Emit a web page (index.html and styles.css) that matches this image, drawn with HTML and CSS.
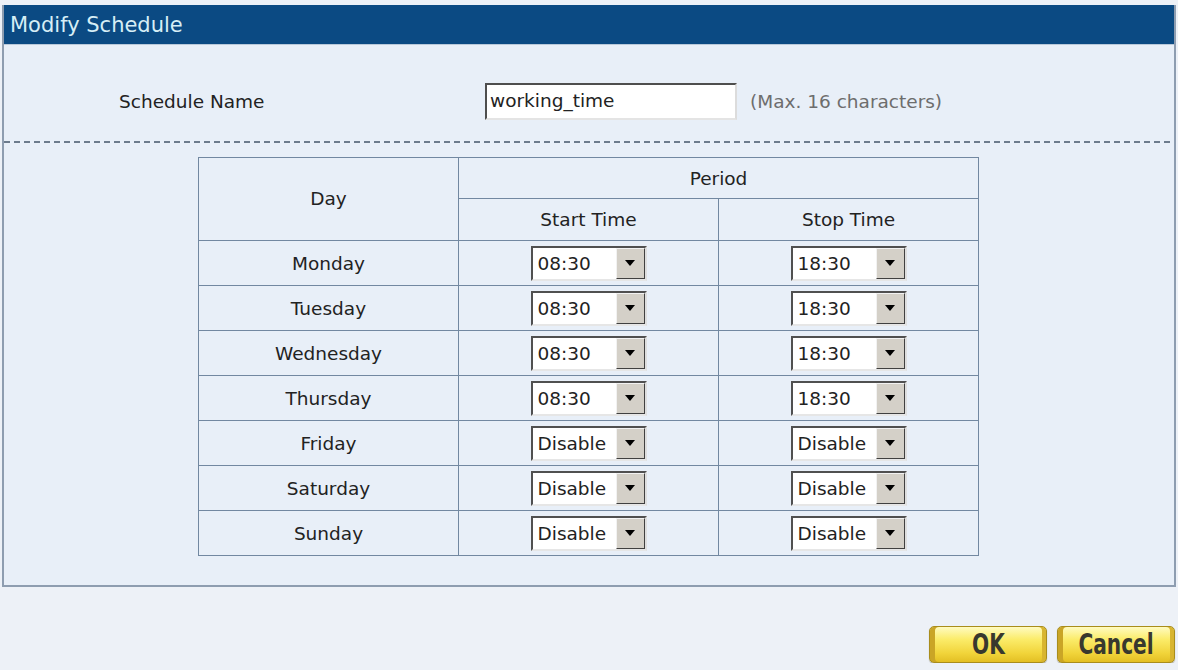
FILE: index.html
```html
<!DOCTYPE html>
<html lang="en">
<head>
<meta charset="utf-8">
<title>Modify Schedule</title>
<link rel="stylesheet" href="styles.css">
</head>
<body>
<div class="panel">
  <div class="panel-head">Modify Schedule</div>
  <div class="name-row">
    <div class="name-label">Schedule Name</div>
    <div class="textbox">working_time</div>
    <div class="hint">(Max. 16 characters)</div>
  </div>
  <div class="dashed"></div>
  <table class="sched">
    <tr class="hrow1">
      <td rowspan="2" class="dayhead">Day</td>
      <td colspan="2">Period</td>
    </tr>
    <tr class="hrow2">
      <td>Start Time</td>
      <td>Stop Time</td>
    </tr>
    <tr><td>Monday</td><td><div class="sel"><span class="val">08:30</span><span class="drop"><i class="tri"></i></span></div></td><td><div class="sel"><span class="val">18:30</span><span class="drop"><i class="tri"></i></span></div></td></tr>
    <tr><td>Tuesday</td><td><div class="sel"><span class="val">08:30</span><span class="drop"><i class="tri"></i></span></div></td><td><div class="sel"><span class="val">18:30</span><span class="drop"><i class="tri"></i></span></div></td></tr>
    <tr><td>Wednesday</td><td><div class="sel"><span class="val">08:30</span><span class="drop"><i class="tri"></i></span></div></td><td><div class="sel"><span class="val">18:30</span><span class="drop"><i class="tri"></i></span></div></td></tr>
    <tr><td>Thursday</td><td><div class="sel"><span class="val">08:30</span><span class="drop"><i class="tri"></i></span></div></td><td><div class="sel"><span class="val">18:30</span><span class="drop"><i class="tri"></i></span></div></td></tr>
    <tr><td>Friday</td><td><div class="sel"><span class="val">Disable</span><span class="drop"><i class="tri"></i></span></div></td><td><div class="sel"><span class="val">Disable</span><span class="drop"><i class="tri"></i></span></div></td></tr>
    <tr><td>Saturday</td><td><div class="sel"><span class="val">Disable</span><span class="drop"><i class="tri"></i></span></div></td><td><div class="sel"><span class="val">Disable</span><span class="drop"><i class="tri"></i></span></div></td></tr>
    <tr><td>Sunday</td><td><div class="sel"><span class="val">Disable</span><span class="drop"><i class="tri"></i></span></div></td><td><div class="sel"><span class="val">Disable</span><span class="drop"><i class="tri"></i></span></div></td></tr>
  </table>
</div>
<div class="actions">
  <div class="ybtn"><span class="ylabel">OK</span></div>
  <div class="ybtn"><span class="ylabel">Cancel</span></div>
</div>
</body>
</html>
```
FILE: styles.css
```css
html, body {
  margin: 0;
  padding: 0;
  background: #edf1f7;
  font-family: "DejaVu Sans", Verdana, sans-serif;
  font-size: 18.5px;
  color: #222;
}
body {
  padding-top: 5px;
}
.panel {
  margin: 0 2px;
  border: 2px solid #8e9db0;
  border-top: 0;
  background: #e8eff8;
  padding-bottom: 29px;
}
.panel-head {
  height: 40px;
  line-height: 40px;
  background: #0b4a83;
  color: #d6eef6;
  font-size: 21px;
  padding-left: 6px;
  border-bottom: 1px solid #b9c9da;
  box-sizing: border-box;
}
.name-row {
  display: flex;
  align-items: center;
  padding: 38px 0 0 115px;
  height: 37px;
  box-sizing: content-box;
}
.name-label {
  width: 366px;
}
.textbox {
  width: 252px;
  height: 37px;
  box-sizing: border-box;
  background: #fff;
  border: 2px solid;
  border-color: #4e4e4e #dcdcdc #e4e4e4 #4e4e4e;
  padding-left: 3px;
  line-height: 32px;
}
.hint {
  margin-left: 13px;
  color: #6d6d6d;
}
.dashed {
  margin-top: 21px;
  height: 2px;
  background: repeating-linear-gradient(90deg, #6c7b8c 0 6px, transparent 6px 10px);
}
.sched {
  margin: 14px 0 0 194px;
  border-collapse: collapse;
  width: 781px;
  table-layout: fixed;
}
.sched td {
  border: 1px solid #7288a1;
  text-align: center;
  height: 44px;
  padding: 0;
  vertical-align: middle;
}
.sched .hrow1 td {
  height: 40px;
}
.sched .hrow2 td {
  height: 41px;
}
.sched .dayhead {
  padding-bottom: 2px;
}
.sel {
  display: inline-flex;
  width: 116px;
  height: 35px;
  box-sizing: border-box;
  background: #fff;
  border: 2px solid;
  border-color: #505050 #dedede #e6e6e6 #505050;
  text-align: left;
  vertical-align: middle;
}
.sel .val {
  flex: 1;
  padding-left: 5px;
  line-height: 31px;
}
.sel .drop {
  width: 29px;
  box-sizing: border-box;
  background: #d4d0c8;
  border: 1px solid;
  border-color: #f2f2f2 #404040 #404040 #f2f2f2;
  display: flex;
  align-items: center;
  justify-content: center;
}
.tri {
  width: 0;
  height: 0;
  border-left: 5px solid transparent;
  border-right: 5px solid transparent;
  border-top: 6px solid #000;
}
.actions {
  display: flex;
  justify-content: flex-end;
  gap: 10px;
  margin-top: 39px;
  padding-right: 3px;
}
.ybtn {
  width: 118px;
  height: 37px;
  box-sizing: border-box;
  border: 1px solid #a98d1c;
  border-radius: 5px;
  background: linear-gradient(#fffbc0 0%, #fbec6a 35%, #f1d43a 75%, #e3bf24 100%);
  box-shadow: inset 5px 0 0 #caa526, inset -4px 0 0 #d8b530, 0 1px 1px #a9a9a0;
  text-align: center;
  line-height: 35px;
  font-family: "DejaVu Sans Condensed", "DejaVu Sans", sans-serif;
  font-stretch: condensed;
  font-weight: bold;
  font-size: 28px;
  color: #38382e;
}
.ylabel {
  display: inline-block;
  transform: scaleX(0.8);
}
```
